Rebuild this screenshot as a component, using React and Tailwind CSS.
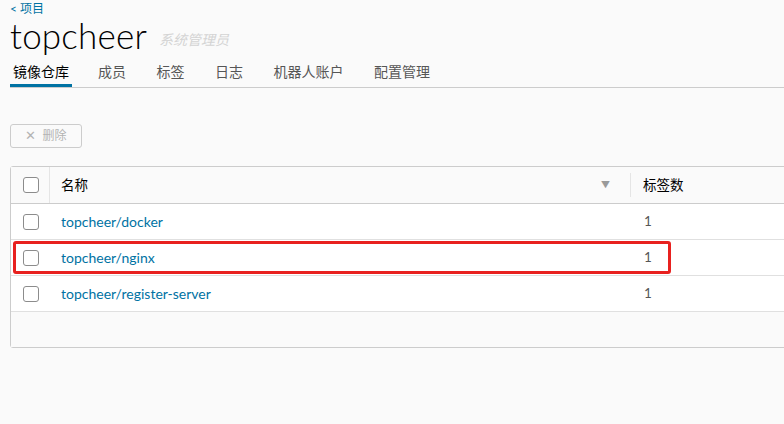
import React from "react";

const tabs = ["镜像仓库", "成员", "标签", "日志", "机器人账户", "配置管理"];
const repos = ["topcheer/docker", "topcheer/nginx", "topcheer/register-server"];

const Box = () => (
  <span className="block w-[16px] h-[16px] rounded-[3px] border border-[#8c8c8c] bg-white" />
);

export default function App() {
  return (
    <div
      className="w-[784px] h-[424px] overflow-hidden bg-[#fafafa] text-[#565656]"
      style={{ fontFamily: "Lato, 'Noto Sans CJK SC', sans-serif" }}
    >
      <div className="pl-[10px] pt-[1px]">
        <a className="block text-[12px] leading-[16px] text-[#0072a3]">&lt; 项目</a>
        <div className="flex items-end h-[36px]">
          <span className="text-[35px] leading-[36px] text-[#000] tracking-[0.2px]" style={{ fontWeight: 300 }}>topcheer</span>
          <span className="ml-[12px] mb-[3px] text-[14px] italic text-[#d4d4d4]">系统管理员</span>
        </div>
        <div className="mt-[2px] flex border-b border-[#cccccc] h-[33px]">
          {tabs.map((t, i) => (
            <div
              key={t}
              className={
                "h-full flex items-center text-[14px] " +
                (i === 0
                  ? "px-[3px] mr-[26px] text-[#000] border-b-[3px] border-[#0072a3] pt-[3px]"
                  : "mr-[30.5px] text-[#565656]")
              }
            >
              {t}
            </div>
          ))}
        </div>

        <button className="mt-[36px] h-[24px] w-[72px] flex items-center justify-center gap-[6px] rounded-[3px] border border-[#cccccc] text-[12px] text-[#b3b3b3]">
          <span className="text-[13px]">✕</span>
          删除
        </button>

        <div className="relative mt-[18px] w-[800px] border border-[#cccccc] rounded-[3px] bg-white text-[13.5px]">
          <div className="flex h-[37px] items-center bg-[#fafafa] border-b border-[#cccccc] text-[#000]">
            <div className="w-[39px] pl-[12px] flex items-center h-full border-r border-[#e5e5e5] my-[6px]">
              <Box />
            </div>
            <div className="w-[581px] pl-[11px] pr-[20px] flex items-center justify-between border-r border-[#e5e5e5] h-[24px]">
              <span>名称</span>
              <span className="text-[9px] text-[#9a9a9a]">▼</span>
            </div>
            <div className="pl-[12px]">标签数</div>
          </div>
          {repos.map((r) => (
            <div key={r} className="flex h-[36px] items-center border-b border-[#e0e0e0] last:border-b-2 last:border-[#d4d4d4] last:h-[37px]">
              <div className="w-[39px] pl-[12px]">
                <Box />
              </div>
              <div className="w-[582px] pl-[11px] text-[14px] text-[#0072a3]">{r}</div>
              <div className="pl-[12px] text-[#565656]">1</div>
            </div>
          ))}
          <div className="h-[35px] bg-[#fafafa]" />
          <div className="absolute left-[2px] top-[74px] w-[658px] h-[33px] rounded-[3px] border-[3px] border-[#e8211f]" />
        </div>
      </div>
    </div>
  );
}
